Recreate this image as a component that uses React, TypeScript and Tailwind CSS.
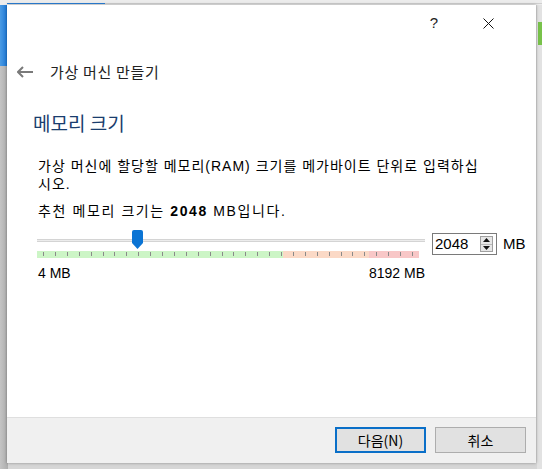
import React from "react";

const sans = "font-['Liberation_Sans','Noto_Sans_CJK_KR',sans-serif]";

function BackArrow() {
  return (
    <svg width="16" height="12" viewBox="0 0 16 12" className="block">
      <path d="M1 6H16M6 1L1 6L6 11" fill="none" stroke="#7a7a7a" strokeWidth="2" />
    </svg>
  );
}

function Handle() {
  return (
    <svg width="11" height="19" viewBox="0 0 11 19" className="block">
      <path d="M2 0H9Q11 0 11 2V13L5.5 19L0 13V2Q0 0 2 0Z" fill="#0b74d4" />
    </svg>
  );
}

const ticks = Array.from({ length: 32 }, (_, i) => 6 + i * 11.9);

export default function App() {
  return (
    <div className={`relative h-[469px] w-[542px] overflow-hidden bg-[#d6d6d6] ${sans}`}>
      {/* desktop behind the dialog */}
      <div className="absolute left-0 top-0 h-[66px] w-[8px] bg-gradient-to-r from-[#4a9be4] to-[#1474d4]" />
      <div className="absolute left-0 top-[66px] h-[403px] w-[8px] bg-gradient-to-r from-[#c4c4c4] to-[#adadad]" />
      <div className="absolute left-0 top-0 h-[5px] w-[542px] bg-[#ececec]" />
      <div className="absolute left-[7px] top-[3px] h-[1px] w-[98px] bg-[#2b7fd6]" />
      <div className="absolute left-[105px] top-[3px] h-[1px] w-[437px] bg-[#d0d0d0]" />
      <div className="absolute left-[537px] top-[5px] h-[464px] w-[5px] bg-[#e2e2e2]" />
      <div className="absolute left-[538px] top-[22px] h-[23px] w-[4px] bg-[#78c24a]" />

      <div className="absolute left-[7px] top-[5px] flex h-[458px] w-[529px] flex-col bg-white shadow-[0_0_3px_rgba(0,0,0,0.35)]">
        <div className="flex h-[36px] justify-end pr-[21px]">
          <div className="flex w-[54px] items-center justify-center text-[15px] text-[#222]">?</div>
          <div className="flex w-[54px] items-center justify-center">
            <svg width="11" height="11" viewBox="0 0 11 11">
              <path d="M0.5 0.5L10.5 10.5M10.5 0.5L0.5 10.5" stroke="#111" strokeWidth="1" />
            </svg>
          </div>
        </div>

        <div className="mt-[21px] flex h-[20px] items-center pl-[10px]">
          <BackArrow />
          <span className="ml-[17px] text-[15px] leading-[20px] tracking-[0.7px] text-[#222] font-['Noto_Sans_CJK_KR',sans-serif]">가상 머신 만들기</span>
        </div>

        <div className="mt-[28px] pl-[26px] text-[19px] leading-[26px] text-[#1a3d6e] font-['Noto_Sans_CJK_KR',sans-serif]">
          메모리 크기
        </div>

        <div className="mt-[21px] pl-[31px] text-[14px] leading-[18px] tracking-[1px] text-black">
          <p className="whitespace-nowrap">
            가상 머신에 할당할 메모리(RAM) 크기를 메가바이트 단위로 입력하십
            <br />
            시오.
          </p>
          <p className="mt-[9px] whitespace-nowrap tracking-[1.6px]">
            추천 메모리 크기는 <b>2048</b> MB입니다.
          </p>
        </div>

        <div className="mt-[10px] flex items-start pl-[30px]">
          <div className="w-[388px]">
            <div className="relative h-[20px]">
              <div className="absolute left-0 right-0 top-[9px] h-[3px] border-y border-[#d4d4d4] bg-[#ececec]" />
              <div className="absolute left-[95px] top-0">
                <Handle />
              </div>
            </div>
            <div className="relative mt-[1px] flex h-[7px] w-[382px]">
              <div className="h-full w-[246px] bg-[#ccf5c6]" />
              <div className="h-full w-[86px] bg-[#fbd9c6]" />
              <div className="h-full flex-1 bg-[#f8c7c7]" />
              {ticks.map((x) => (
                <div key={x} className="absolute top-[1px] h-[4px] w-[1px] bg-[#8a8a8a]" style={{ left: x }} />
              ))}
            </div>
            <div className="mt-[7px] flex justify-between text-[14px] leading-[16px] text-black">
              <span className="pl-[1px]">4 MB</span>
              <span>8192 MB</span>
            </div>
          </div>
          <div className="ml-[7px] mt-[3px] flex items-center">
            <div className="flex h-[22px] w-[65px] items-center border border-[#7a7a7a] bg-white pl-[2px] pr-[3px]">
              <span className="flex-1 text-[15px] leading-[20px]">2048</span>
              <div className="flex h-[16px] w-[13px] flex-col border border-[#a0a0a0] bg-[#e6e6e6]">
                <div className="flex flex-1 items-center justify-center border-b border-[#b8b8b8]">
                  <svg width="7" height="4" viewBox="0 0 7 4"><path d="M0 4L3.5 0L7 4Z" fill="#111" /></svg>
                </div>
                <div className="flex flex-1 items-center justify-center">
                  <svg width="7" height="4" viewBox="0 0 7 4"><path d="M0 0L3.5 4L7 0Z" fill="#111" /></svg>
                </div>
              </div>
            </div>
            <span className="ml-[6px] text-[15px] leading-[20px]">MB</span>
          </div>
        </div>

        <div className="flex-1" />

        <div className="flex h-[46px] justify-end gap-[9px] border-t border-[#dfdfdf] bg-[#f0f0f0] pr-[10px] pt-[9px]">
          <button className="flex h-[26px] w-[91px] items-center justify-center border-2 border-[#0a6fc8] bg-[#e1e1e1] text-[14px] text-black font-['Noto_Sans_CJK_KR',sans-serif]">
            다음(N)
          </button>
          <button className="flex h-[26px] w-[91px] items-center justify-center border border-[#adadad] bg-[#e1e1e1] text-[14px] text-black font-['Noto_Sans_CJK_KR',sans-serif]">
            취소
          </button>
        </div>
      </div>
    </div>
  );
}
